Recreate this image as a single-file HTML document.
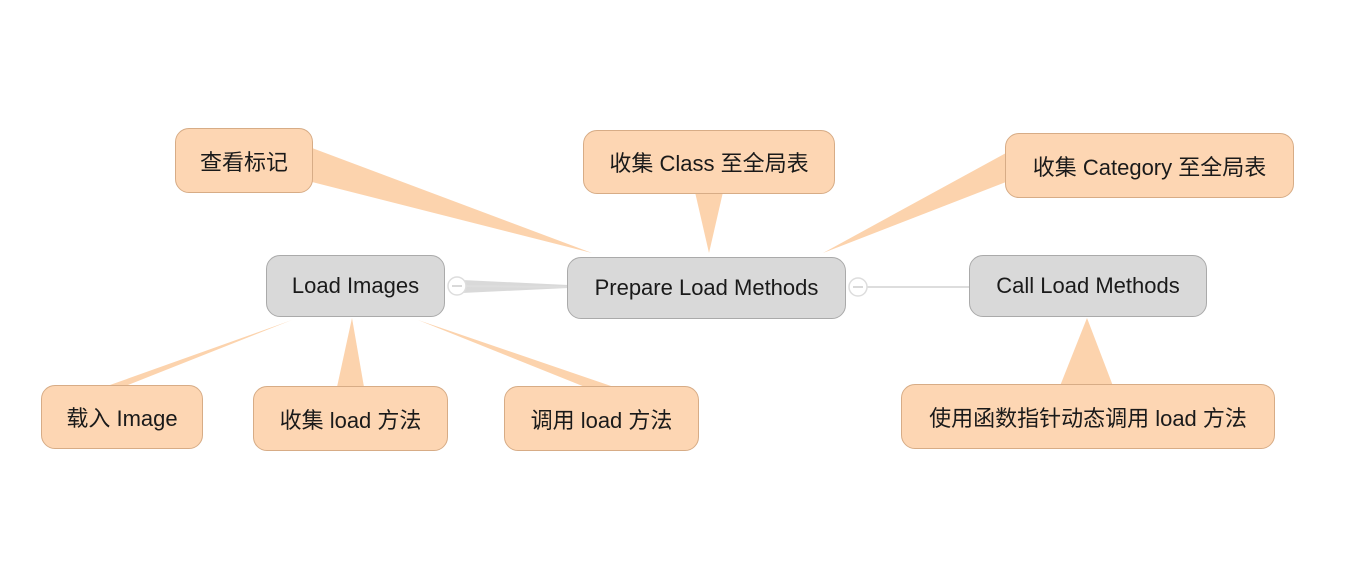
<!DOCTYPE html>
<html><head><meta charset="utf-8"><style>
body{margin:0;width:1356px;height:562px;background:#fff;position:relative;overflow:hidden;font-family:"Liberation Sans","Noto Sans CJK SC",sans-serif;}
.b{position:absolute;box-sizing:border-box;border-radius:14px;display:flex;align-items:center;justify-content:center;font-size:22px;color:#1a1a1a;white-space:nowrap}
.o{background:#fdd6b3;border:1.5px solid #d7ac86}
.g{background:#d9d9d9;border:1.5px solid #aaaaaa}
svg{position:absolute;left:0;top:0}
</style></head><body>
<svg width="1356" height="562">
<g fill="#fcd3ad">
<polygon points="312,148 312,182 592,253"/>
<polygon points="695,192 723,192 709,253"/>
<polygon points="1006,153 1006,182 823,253"/>
<polygon points="110,385 128,385 292,320"/>
<polygon points="337,387 364,387 352,318"/>
<polygon points="585,387 614,387 418,320"/>
<polygon points="1060,386 1113,386 1087,318"/>
</g>
<polygon points="462,280 462,293 568,288 568,285" fill="#d9d9d9"/>
<line x1="567" y1="287" x2="460" y2="286" stroke="#ddd" stroke-width="2"/>
<circle cx="457" cy="286" r="9" fill="#fff" stroke="#ddd" stroke-width="1.5"/>
<line x1="452" y1="286" x2="462" y2="286" stroke="#ccc" stroke-width="1.5"/>
<line x1="866" y1="287" x2="970" y2="287" stroke="#ddd" stroke-width="2"/>
<circle cx="858" cy="287" r="9" fill="#fff" stroke="#ddd" stroke-width="1.5"/>
<line x1="853" y1="287" x2="863" y2="287" stroke="#ccc" stroke-width="1.5"/>
</svg>
<div class="b o" style="left:175px;top:128px;width:138px;height:65px">查看标记</div>
<div class="b o" style="left:583px;top:130px;width:252px;height:64px">收集 Class 至全局表</div>
<div class="b o" style="left:1005px;top:133px;width:289px;height:65px">收集 Category 至全局表</div>
<div class="b g" style="left:266px;top:255px;width:179px;height:62px">Load Images</div>
<div class="b g" style="left:567px;top:257px;width:279px;height:62px">Prepare Load Methods</div>
<div class="b g" style="left:969px;top:255px;width:238px;height:62px">Call Load Methods</div>
<div class="b o" style="left:41px;top:385px;width:162px;height:64px">载入 Image</div>
<div class="b o" style="left:253px;top:386px;width:195px;height:65px">收集 load 方法</div>
<div class="b o" style="left:504px;top:386px;width:195px;height:65px">调用 load 方法</div>
<div class="b o" style="left:901px;top:384px;width:374px;height:65px">使用函数指针动态调用 load 方法</div>
</body></html>
